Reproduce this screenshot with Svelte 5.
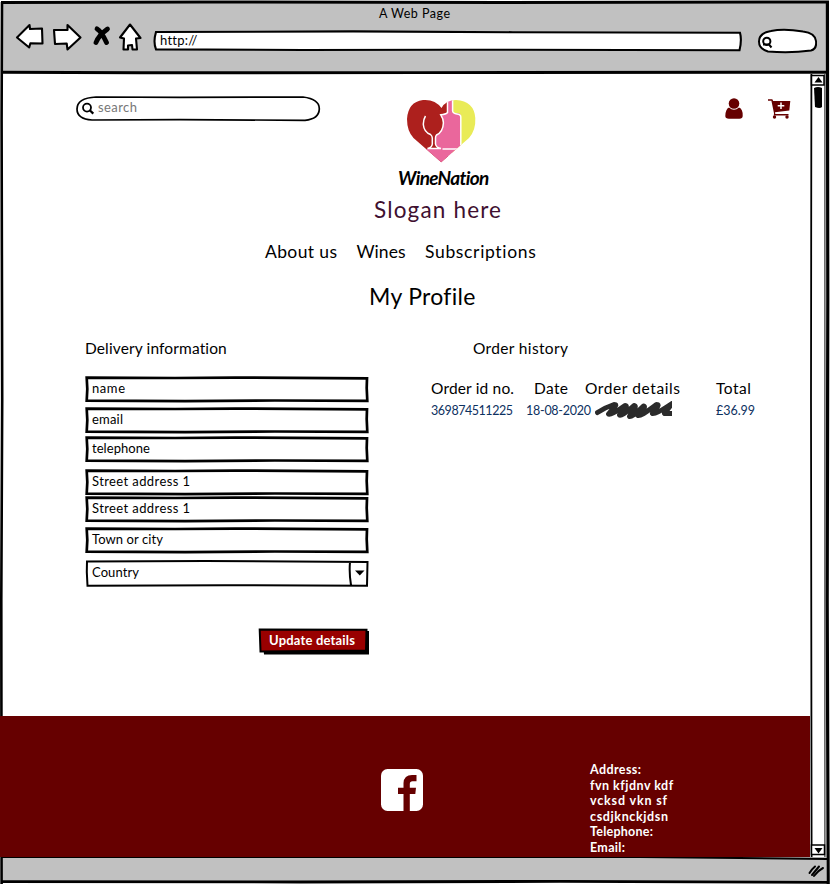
<script>
  const nav = [['About us', 72], ['Wines', 49], ['Subscriptions', 111]];
  const fields = [
    { label: 'name', w: 33, gap: 0 },
    { label: 'email', w: 31, gap: 5 },
    { label: 'telephone', w: 58, gap: 3 },
    { label: 'Street address 1', w: 98, gap: 7 },
    { label: 'Street address 1', w: 98, gap: 1 },
    { label: 'Town or city', w: 71, gap: 5 }
  ];
  const contact = [['Address:', 51], ['fvn kfjdnv kdf', 83], ['vcksd vkn sf', 77], ['csdjknckjdsn', 78], ['Telephone:', 63], ['Email:', 35]];

  // Tracks a label out (or in) so that it fills the given width.
  function fit(node, width) {
    const natural = node.getBoundingClientRect().width;
    const n = node.textContent.length;
    const s = (width - natural) / (n - 1);
    node.style.letterSpacing = s + 'px';
    node.style.marginRight = -s + 'px';
  }
</script>

<div class="window">
  <svg class="frame" width="830" height="884" viewBox="0 0 830 884">
    <path d="M2 2H827V73H3Z" fill="#c1c1c1" />
    <path d="M3 857H826V881H3Z" fill="#c1c1c1" />
    <g fill="none" stroke="#000">
      <path d="M1 2.4L200 2L500 2.5L829 2" stroke-width="3" />
      <path d="M2 2L1.6 120L2.2 400L1.3 600L1.6 884" stroke-width="2.6" />
      <path d="M827.4 2L827.8 300L827.2 600L828.2 884" stroke-width="3.2" />
      <path d="M2 72.3L140 72.8L420 72.6L827 72.2" stroke-width="2.9" />
      <path d="M2 857L640 857L827 859" stroke-width="2" />
      <path d="M2 881.6L300 882L560 881.4L829 882.3" stroke-width="2.8" />
      <path d="M811.4 74L811 400L811.6 857" stroke-width="1.8" />
      <path d="M824.9 74V857" stroke-width="1.2" stroke="#333" />
    </g>
  </svg>

  <header class="chrome">
    <div class="title"><span use:fit={71}>A Web Page</span></div>
    <div class="bar">
      <svg class="tools" width="130" height="32" viewBox="14 21 130 32" stroke="#000" stroke-width="2.1" stroke-linejoin="round">
        <g fill="#fff">
          <path d="M17 37.5L29.5 25L30 29L42 28.5L42.5 43.5L30.3 43.4L29.2 47.5Z" />
          <path d="M54 30L67.5 30L67.5 25L80.5 37.5L67.5 49.5L66.7 43.5L55 44Z" />
          <path d="M130 24.5L120 37.5L124 38.5L123.5 49.5H128V45.5L132 45L132.5 49.5H137L136 38.5L140.5 38Z" />
        </g>
        <path d="M97 28.800C101 31 104 37 106.500 42.500M107.500 29C102 33 98 37 96 42.500" fill="none" stroke-width="4.800" stroke-linecap="round" />
      </svg>
      <div class="url">
        <svg class="back" width="590" height="22" viewBox="0 0 590 22"><path d="M3 2L200 1.4L360 2.2L587 2.8Q589 10 586.5 20.3L300 19.7L150 20L3 19.4Q0 12 3 2Z" fill="#fff" stroke="#000" stroke-width="2.100" /></svg>
        <span use:fit={37}>http://</span>
      </div>
      <svg class="find" width="60" height="26" viewBox="757 28 60 26" fill="#fff" stroke="#000" stroke-width="2">
        <path d="M768 51.5Q759 49 759 41.5Q759 33 771 31Q784 28.5 803 31.5Q815 33 816 41Q817 49 811 50.5Q790 53.5 768 51.5Z" />
        <circle cx="766.8" cy="41.3" r="3.6" fill="none" /><path d="M763 44.5H769L771.5 47.5" fill="none" />
      </svg>
    </div>
  </header>

  <div class="body">
    <main>
      <section class="masthead">
        <div class="search">
          <svg class="back" width="246" height="27" viewBox="75 95 246 27"><path d="M96 97L180 97.3L303 97Q319.5 99 319.3 109Q319 119 305 120.3L180 119.6L92 120Q77 119 77 109Q77 98 96 97Z" fill="#fff" stroke="#000" stroke-width="1.7" /></svg>
          <svg width="14" height="14" viewBox="81 101 14 14" fill="none" stroke="#000" stroke-width="1.8"><circle cx="87" cy="107.6" r="4" /><path d="M90 110.5L93.3 113.7" stroke-width="2.3" /></svg>
          <span use:fit={39}>search</span>
        </div>
        <div class="logo">
          <svg width="92" height="66" viewBox="396 98 92 66">
            <defs><clipPath id="heart"><path d="M441.2 162.2L413.5 138Q407 131 407 119Q408 102 423 100Q435 99 441.5 108Q446 100 456 100Q474 101 475.3 118Q476 130 469 138Z" /></clipPath></defs>
            <g clip-path="url(#heart)">
              <path d="M405 98H448V165H405Z" fill="#ad201d" />
              <path d="M452 98H477V165H452Z" fill="#e9eb57" />
              <path d="M448 98H452.500V113H457Q461 113 461 117V149L441 164L424 149H440L436 145V135Q443 133 443.500 122L440.500 114.500L447 113Z" fill="#ea679c" />
              <g fill="none" stroke="#fff" stroke-width="1.500">
                <path d="M447.500 97V112.500Q446 114.500 440.800 114.800Q443.500 119 443.400 123Q443 132 436.500 135Q435.500 136 435.500 138V144Q436 147.500 441 148.600H427.500Q432 147.500 432.300 144V138Q432.300 136 430.500 134.500Q424 132 423.400 125Q423 120 425.500 116" />
                <path d="M452.600 97V111Q453 113.500 457 114Q460.800 114.500 460.800 117V149H442.500" />
              </g>
            </g>
          </svg>
          <span class="brand" use:fit={91}>WineNation</span>
        </div>
        <svg class="person" width="18" height="22" viewBox="725 98 18 22" fill="#600"><circle cx="734" cy="103.500" r="5.300" /><path d="M729 107.500Q734 112 739 107.500Q743 109 742.700 116Q742.500 118.700 739.500 118.700H729Q725.300 118.700 725.300 116Q725.500 109 729 107.500Z" /></svg>
        <svg class="cart" width="23" height="20" viewBox="768 99 23 20" fill="#600">
          <path d="M768 99.200H772.300L773.200 101H790.300L789.300 110.500L775 112.300L775.300 114H788.500V115.500H773.800L774 113.200L771.400 100.800H768Z" /><circle cx="774.500" cy="117" r="1.700" /><circle cx="787" cy="117" r="1.700" />
          <path d="M781 102.500V109M777.700 105.700H784.300" stroke="#fff" stroke-width="1.500" />
        </svg>
      </section>

      <p class="slogan"><span use:fit={127}>Slogan here</span></p>
      <nav>{#each nav as [label, w]}<a href="#top"><span use:fit={w}>{label}</span></a>{/each}</nav>
      <h1><span use:fit={106}>My Profile</span></h1>

      <div class="columns">
        <section class="delivery">
          <h2><span use:fit={142}>Delivery information</span></h2>
          {#each fields as f}
            <div class="field" style="margin-top: {f.gap}px">
              <svg class="back" width="284" height="27" viewBox="0 0 284 27"><path d="M1.700 1.700L90 2L150 1.600L282 2.300L281.700 12L282.300 24.800L190 24.500L100 25.200L1.700 24.600L2.300 13Z" fill="#fff" stroke="#000" stroke-width="2.700" /></svg>
              <span use:fit={f.w}>{f.label}</span>
            </div>
          {/each}
          <div class="field country">
            <svg class="back" width="284" height="27" viewBox="0 0 284 27"><path d="M2 1.500L120 1L282.500 2L282 25.700L140 25.200L2.500 25.700L1.800 12ZM265 2Q264 13 266 25" fill="#fff" stroke="#000" stroke-width="2" /><path d="M270 10.500H279.500L274.800 15.500Z" /></svg>
            <span use:fit={47}>Country</span>
          </div>
          <button>
            <svg class="back" width="111" height="28" viewBox="258 628 111 28"><path d="M262 631H369V654.500H264Z" /><path d="M259.700 629.500L366.500 629.800L366 650.500L260.500 651.500Z" fill="#900" stroke="#000" stroke-width="2" /></svg>
            <span use:fit={86}>Update details</span>
          </button>
        </section>

        <section class="orders">
          <h2><span use:fit={95}>Order history</span></h2>
          <div class="row head">
            <span><i use:fit={83}>Order id no.</i></span>
            <span class="date"><i use:fit={34}>Date</i></span>
            <span><i use:fit={95}>Order details</i></span>
            <span><i use:fit={35}>Total</i></span>
          </div>
          <div class="row">
            <span><i use:fit={82}>369874511225</i></span>
            <span><i use:fit={65}>18-08-2020</i></span>
            <span class="scribble"><svg width="77" height="19" viewBox="595 401 77 19"><path d="M597.500 412.500Q605 407.500 614 404.500Q618 404.500 613 408.500L608.500 414Q610 416 625 405.500Q628 405.500 624 409L619.500 415Q621 417 634 405.500Q637 406 633 410L629.500 416.500Q631 418 643.500 406Q646 406.500 642 410L638 415.500Q640 417 656.500 404.500Q660 404.500 656 408.500L652.500 413.500Q655 415 672 403.500L664.500 413.500H674" fill="none" stroke="#2b2b2b" stroke-width="5" stroke-linecap="round" stroke-linejoin="round" /></svg></span>
            <span><i use:fit={39}>£36.99</i></span>
          </div>
        </section>
      </div>

      <footer>
        <svg width="42" height="42" viewBox="0 0 42 42"><rect width="42" height="42" rx="6.500" fill="#fff" /><path d="M22.500 42V25H17V18.800H22.500V14Q23 6 31 6H35.500V12.300H31.500Q28.800 12.300 28.800 15V18.800H35L34.300 25H28.800V42Z" fill="#600" /></svg>
        <address>{#each contact as [line, w]}<div><span use:fit={w}>{line}</span></div>{/each}</address>
      </footer>
    </main>
    <aside>
      <svg width="16" height="35" viewBox="810 74 16 35"><path d="M811.500 75.500H824V85H811.500Z" fill="#fff" stroke="#000" stroke-width="1.500" /><path d="M814.500 82.500L818.500 77L822.500 82.500Z" /><path d="M814 88Q818 86 822 88V107Q820 109 815 107Z" /></svg>
      <svg width="16" height="13" viewBox="810 845 16 13"><path d="M811.500 846H824.500V855.500H811.500Z" fill="#fff" stroke="#000" stroke-width="1.500" /><path d="M814.500 849H822.500L818.500 854.500Z" /></svg>
    </aside>
  </div>

  <div class="status"><svg width="18" height="14" viewBox="807 864 18 14"><path d="M815 866.500Q812 869 809.500 873M823 868Q818 870.500 814 876M819 866.500L812 875" fill="none" stroke="#000" stroke-width="2" stroke-linecap="round" /></svg></div>
</div>

<style>
  :global(body) { margin: 0; background: #fff; }
  .window { position: relative; width: 830px; height: 884px; overflow: hidden; display: flex; flex-direction: column; font: 13px/20px Lato, "Open Sans", sans-serif; color: #000; }
  svg { display: block; flex: none; }
  span, i { white-space: nowrap; font-style: normal; }
  .frame, .back { position: absolute; left: 0; top: 0; }
  .chrome, .body, .status { position: relative; }
  .chrome { height: 74px; flex: none; }
  .title { padding: 4px 0 0 379px; height: 17px; line-height: 20px; font-size: 12.5px; }
  .bar { display: flex; align-items: flex-start; padding-left: 14px; }
  .url { position: relative; width: 590px; height: 22px; margin: 9px 0 0 9px; line-height: 21px; font-size: 13px; }
  .url span { position: relative; display: inline-block; margin-left: 7px; }
  .find { margin: 7px 0 0 14px; }
  .body { height: 783px; flex: none; display: flex; }
  main { width: 810px; display: flex; flex-direction: column; }
  .masthead { display: flex; align-items: flex-start; height: 122px; }
  .search { position: relative; display: flex; margin: 21px 0 0 75px; width: 246px; height: 27px; font-size: 13px; line-height: 25px; color: #777; }
  .search svg:nth-child(2) { position: relative; margin: 6px 3px 0 6px; }
  .search span { position: relative; }
  .logo { margin: 24px 0 0 77px; width: 92px; display: flex; flex-direction: column; }
  .logo svg { margin-left: -2px; }
  .brand { font-size: 19px; line-height: 27px; font-style: italic; font-weight: 700; align-self: flex-start; }
  .person { margin: 24px 0 0 235px; }
  .cart { margin: 25px 0 0 25px; }
  p, h1, h2 { margin: 0; font-weight: 400; }
  .slogan { padding-left: 374px; font-size: 22.500px; line-height: 28px; color: #401030; }
  nav { display: flex; gap: 19.500px; margin: 14px 0 0 265px; font-size: 17.500px; line-height: 28px; }
  nav a { color: inherit; text-decoration: none; }
  h1 { margin-top: 15px; padding-left: 369px; font-size: 23px; line-height: 30px; }
  h2 { font-size: 15.500px; line-height: 20px; }
  .columns { display: flex; height: 405px; flex: none; }
  .delivery { width: 284px; margin: 27px 0 0 85px; display: flex; flex-direction: column; }
  .delivery h2 { margin-bottom: 18px; }
  .field { position: relative; height: 26px; line-height: 25px; padding-left: 7px; }
  .field span { position: relative; }
  .country { margin-top: 7px; height: 27px; }
  button { position: relative; align-self: flex-end; width: 111px; height: 28px; margin-top: 41px; padding: 0 0 3px 11px; border: 0; background: none; text-align: left; font: 700 13px/25px Lato, sans-serif; color: #fff; }
  button span { position: relative; }
  .orders { width: 340px; margin: 27px 0 0 62px; }
  .orders h2 { padding-left: 42px; }
  .row { display: grid; grid-template-columns: 95px 59px 131px 50px; font-size: 12.500px; line-height: 20px; color: #0d315f; }
  .head { margin-top: 18px; font-size: 15.500px; line-height: 24px; color: #000; }
  .head + .row { margin-top: 1px; }
  .date { padding-left: 8px; }
  .scribble { padding: 0 0 0 10px; }
  footer { flex: none; height: 141px; width: 810px; background: #600; display: flex; }
  footer svg { margin: 53px 0 0 381px; }
  address { margin: 46px 0 0 167px; color: #fff; font-style: normal; font-weight: 700; font-size: 12.500px; line-height: 15.600px; }
  aside { width: 16px; display: flex; flex-direction: column; justify-content: space-between; }
  .status { flex: 1; display: flex; justify-content: flex-start; padding: 7px 0 0 807px; }
</style>
